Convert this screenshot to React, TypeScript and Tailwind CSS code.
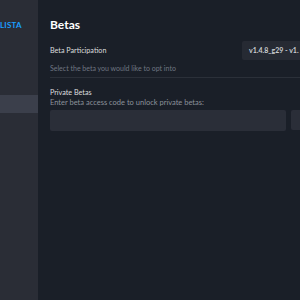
export default function App() {
  return (
    <div
      className="flex h-[300px] w-[300px] overflow-hidden bg-[#1a1f28] text-left"
      style={{ fontFamily: 'Lato, "Noto Sans", sans-serif' }}
    >
      {/* sidebar */}
      <div className="flex w-[38px] shrink-0 flex-col items-start overflow-hidden bg-[#2a2d36]">
        <div className="mt-[21px] h-[8px] whitespace-nowrap text-[8px] font-bold leading-[8px] tracking-[0.2px] text-[#1a9fff]">
          LISTA
        </div>
        <div className="mt-[66px] h-[18px] w-full bg-[#3b3f4b]" />
      </div>

      {/* main */}
      <div className="flex-1 overflow-hidden bg-[#1a1f28] pl-[12px] pt-[19px]">
        <div className="w-[290px]">
          <h1 className="text-[12px] font-bold leading-[12px] text-white">Betas</h1>

          <div className="mt-[10px] flex h-[19px] items-center justify-between">
            <span className="text-[7.2px] leading-[7px] text-[#dcdedf]">Beta Participation</span>
            <div className="flex h-[19px] w-[98px] items-center overflow-hidden rounded-[2px] bg-[#262a33] pl-[7px]">
              <span className="whitespace-nowrap text-[7px] font-bold leading-[7px] text-[#c9ccd0]">
                v1.4.8_g29 - v1.
              </span>
            </div>
          </div>

          <p className="mt-[5px] text-[7px] leading-[7px] text-[#6f7682]">
            Select the beta you would like to opt into
          </p>

          <div className="mt-[5px] h-px bg-[#2b3039]" />

          <p className="mt-[11px] text-[7.2px] leading-[7px] text-[#dcdedf]">Private Betas</p>
          <p className="mt-[3px] text-[7.5px] leading-[7px] text-[#8b929a]">
            Enter beta access code to unlock private betas:
          </p>

          <div className="mt-[4px] flex gap-[5px]">
            <div className="h-[21px] w-[236px] rounded-[2px] bg-[#2a2e38]" />
            <div className="h-[20px] flex-1 rounded-[2px] bg-[#2a2e38]" />
          </div>
        </div>
      </div>
    </div>
  );
}
